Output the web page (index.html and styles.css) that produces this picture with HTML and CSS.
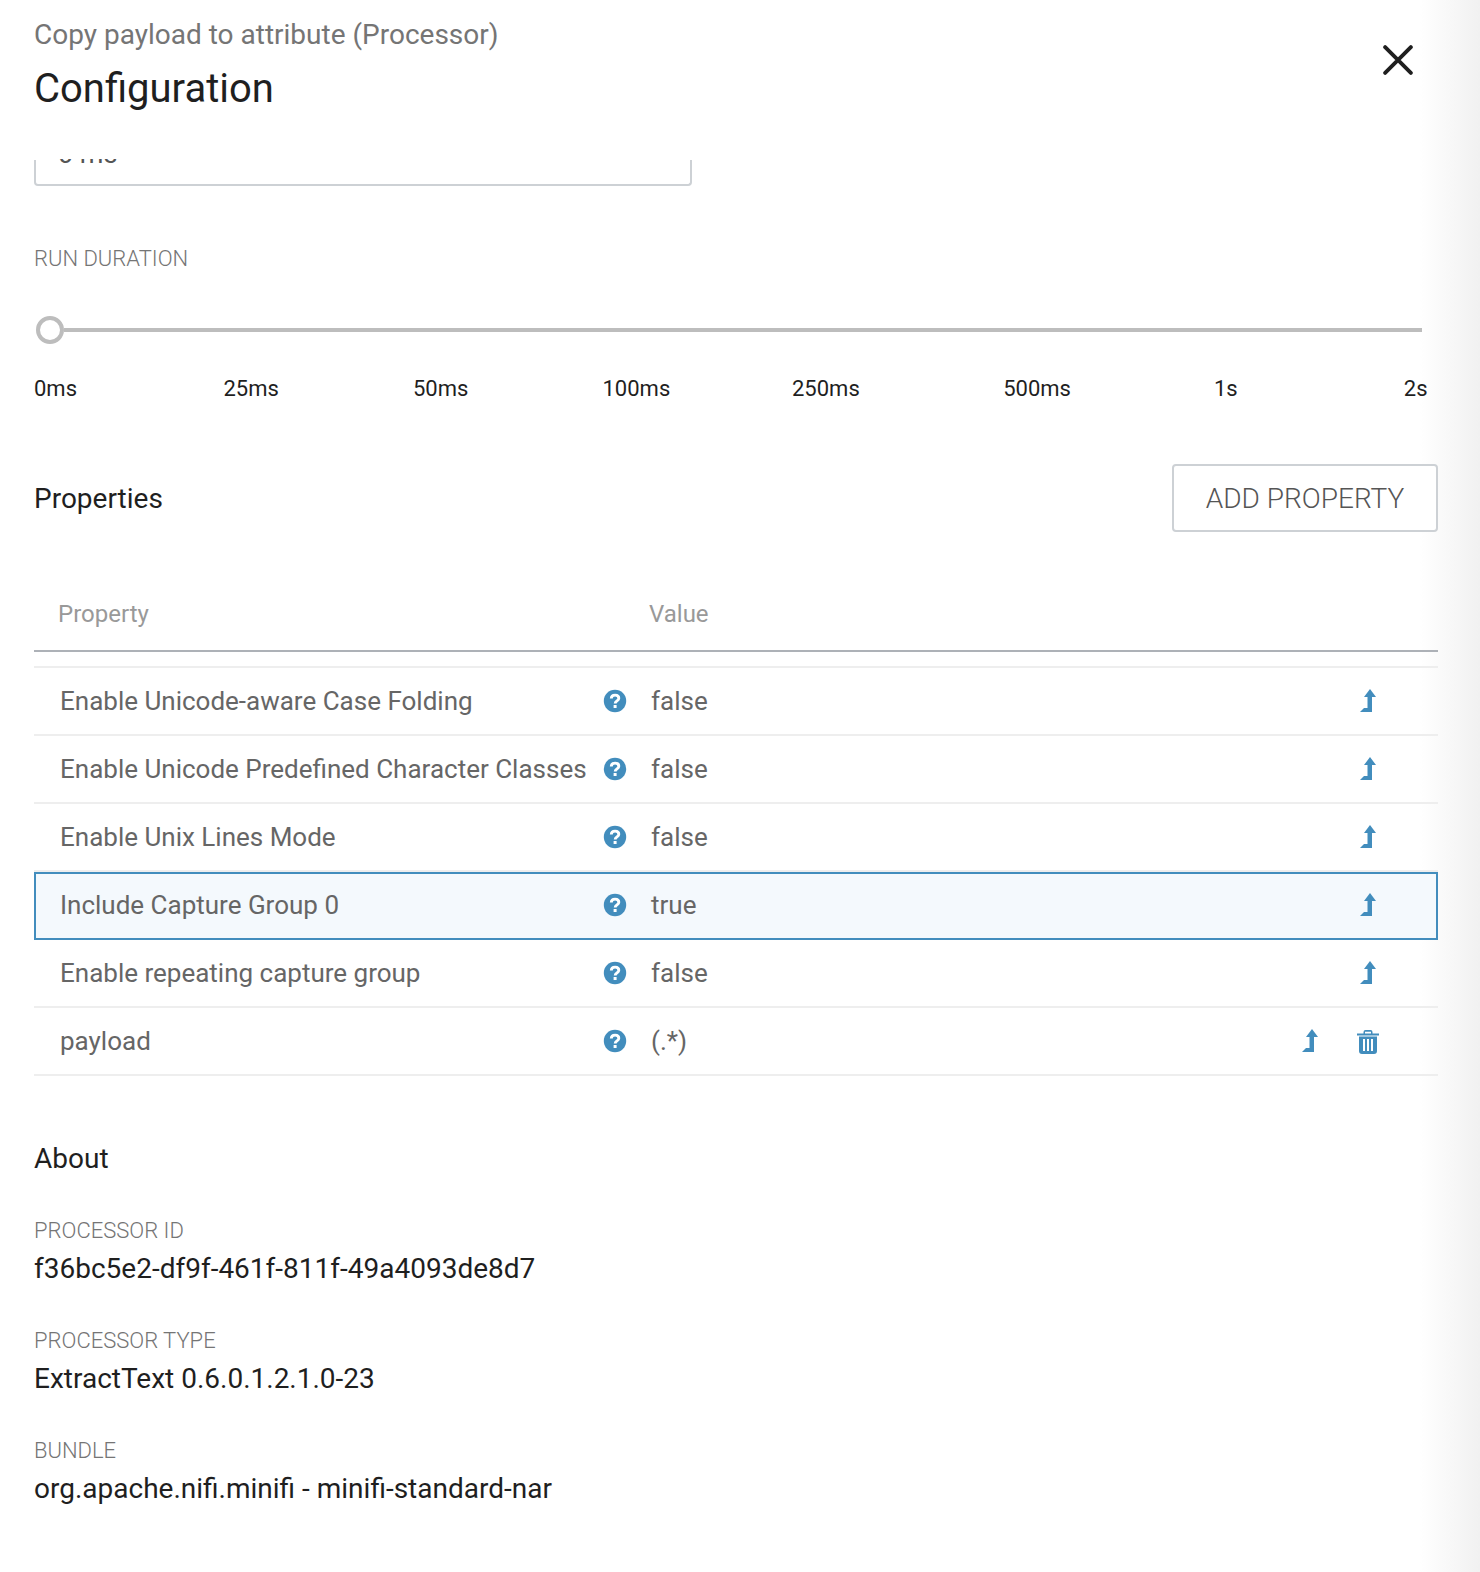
FILE: index.html
```html
<!DOCTYPE html>
<html lang="en">
<head>
  <meta charset="UTF-8">
  <title>Configuration</title>
  <link rel="stylesheet" href="styles.css">
</head>
<body>
  <svg class="defs" width="0" height="0">
    <symbol id="i-help" viewBox="0 0 24 24">
      <circle cx="12" cy="12" r="11.2" fill="#428dbd"/>
      <path d="M8.300 9.600c0-2.200 1.600-3.500 3.800-3.500s3.700 1.300 3.700 3.200c0 2.600-3.600 2.700-3.600 5.200" fill="none" stroke="#fff" stroke-width="2.900"/>
      <rect x="10.600" y="16" width="3" height="3" fill="#fff"/>
    </symbol>
    <symbol id="i-up" viewBox="0 0 16 23">
      <path d="M10 0 16 8H12V23H0L4 19H7.500V8H4z" fill="#428dbd"/>
    </symbol>
    <symbol id="i-trash" viewBox="0 0 22 24">
      <path d="M0 3.500h6.500V2q0-2 2-2h5q2 0 2 2v1.500H22v2H0zM8 3.500h6V1.800H8z" fill="#428dbd" fill-rule="evenodd"/>
      <path d="M2 6.500h18V21q0 3-3 3H5q-3 0-3-3zM6 9v12h2V9zM10 9v12h2V9zM14 9v12h2V9z" fill="#428dbd" fill-rule="evenodd"/>
    </symbol>
  </svg>

  <div class="panel">
    <header class="head">
      <div>
        <div class="subtitle">Copy payload to attribute (Processor)</div>
        <h1>Configuration</h1>
      </div>
      <svg class="close" viewBox="0 0 28 28"><path d="M2 2 26 26M26 2 2 26" stroke="#1f1f1f" stroke-width="3.600" fill="none" stroke-linecap="round"/></svg>
    </header>

    <div class="clipped-input"><div class="clipped-value"><span>0 ms</span></div></div>

    <div class="label run-label">RUN DURATION</div>
    <div class="slider"><span class="knob"></span><span class="track"></span></div>
    <div class="ticks">
      <span>0ms</span><span>25ms</span><span>50ms</span><span>100ms</span><span>250ms</span><span>500ms</span><span>1s</span><span>2s</span>
    </div>

    <div class="props-head">
      <h2>Properties</h2>
      <button class="add-btn">ADD PROPERTY</button>
    </div>

    <div class="table-head"><span class="col-name">Property</span><span>Value</span></div>
    <div class="rows">
      <div class="row">
        <span class="col-name">Enable Unicode-aware Case Folding</span>
        <svg class="help"><use href="#i-help"/></svg>
        <span class="col-value">false</span>
        <span class="actions"><svg class="up"><use href="#i-up"/></svg></span>
      </div>
      <div class="row">
        <span class="col-name">Enable Unicode Predefined Character Classes</span>
        <svg class="help"><use href="#i-help"/></svg>
        <span class="col-value">false</span>
        <span class="actions"><svg class="up"><use href="#i-up"/></svg></span>
      </div>
      <div class="row">
        <span class="col-name">Enable Unix Lines Mode</span>
        <svg class="help"><use href="#i-help"/></svg>
        <span class="col-value">false</span>
        <span class="actions"><svg class="up"><use href="#i-up"/></svg></span>
      </div>
      <div class="row selected">
        <span class="col-name">Include Capture Group 0</span>
        <svg class="help"><use href="#i-help"/></svg>
        <span class="col-value">true</span>
        <span class="actions"><svg class="up"><use href="#i-up"/></svg></span>
      </div>
      <div class="row">
        <span class="col-name">Enable repeating capture group</span>
        <svg class="help"><use href="#i-help"/></svg>
        <span class="col-value">false</span>
        <span class="actions"><svg class="up"><use href="#i-up"/></svg></span>
      </div>
      <div class="row">
        <span class="col-name">payload</span>
        <svg class="help"><use href="#i-help"/></svg>
        <span class="col-value">(.*)</span>
        <span class="actions"><svg class="up"><use href="#i-up"/></svg><svg class="trash"><use href="#i-trash"/></svg></span>
      </div>
    </div>

    <h2 class="about">About</h2>
    <div class="label">PROCESSOR ID</div>
    <div class="info">f36bc5e2-df9f-461f-811f-49a4093de8d7</div>
    <div class="label">PROCESSOR TYPE</div>
    <div class="info">ExtractText 0.6.0.1.2.1.0-23</div>
    <div class="label">BUNDLE</div>
    <div class="info">org.apache.nifi.minifi - minifi-standard-nar</div>
  </div>
</body>
</html>
```

FILE: styles.css
```css
* {
  box-sizing: border-box;
}
html, body {
  margin: 0;
  height: 1572px;
  overflow: hidden;
}
body {
  font-family: Roboto, sans-serif;
  color: #1f1f1f;
  background: linear-gradient(to right, #fff 0, #fff 1420px, #f1f1f1 1480px);
}
.defs {
  position: absolute;
}
.panel {
  width: 1438px;
  padding-left: 34px;
}
.head {
  height: 160px;
  display: flex;
  justify-content: space-between;
  padding-top: 17px;
}
.subtitle {
  font-size: 28px;
  line-height: 36px;
  color: #757575;
}
h1 {
  margin: 12px 0 0;
  font-size: 40px;
  line-height: 48px;
  font-weight: 400;
}
.close {
  width: 30px;
  height: 30px;
  margin: 28px 25px 0 0;
}
.clipped-input {
  display: flow-root;
  width: 658px;
  height: 26px;
  border: 2px solid #cdd1d5;
  border-top: 0;
  border-radius: 0 0 4px 4px;
  padding-left: 22px;
  font-size: 27px;
  line-height: 26px;
  color: #555;
}
.clipped-value {
  height: 4px;
  margin-top: -1px;
  overflow: hidden;
}
.clipped-value span {
  display: block;
  margin-top: -18px;
}
.label {
  font-size: 22px;
  line-height: 28px;
  font-weight: 300;
  color: #757575;
}
.run-label {
  margin-top: 59px;
}
.slider {
  display: flex;
  align-items: center;
  height: 30px;
  margin: 42px 0 0 2px;
  width: 1386px;
}
.knob {
  width: 28px;
  height: 28px;
  border: 4px solid #bdbdbd;
  border-radius: 50%;
  flex: none;
}
.track {
  flex: 1;
  height: 4px;
  background: #bdbdbd;
}
.ticks {
  display: grid;
  grid-template-columns: repeat(4, 189.500px) 211.200px 210.800px 189.800px auto;
  margin-top: 30px;
  font-size: 22px;
  line-height: 28px;
}
.props-head {
  display: flex;
  justify-content: space-between;
  align-items: center;
  margin-top: 61px;
  height: 68px;
}
h2 {
  margin: 0;
  font-size: 28px;
  line-height: 36px;
  font-weight: 400;
}
.props-head h2 {
  padding-top: 2px;
}
.add-btn {
  width: 266px;
  height: 68px;
  background: #fff;
  border: 2px solid #cdd1d5;
  border-radius: 4px;
  font-family: inherit;
  font-size: 28px;
  font-weight: 300;
  color: #555;
}
.table-head {
  display: flex;
  align-items: center;
  height: 120px;
  padding: 45px 0 0 24px;
  border-bottom: 2px solid #adb1b7;
  font-size: 24px;
  color: #999;
}
.table-head .col-name {
  width: 591px;
}
.rows {
  margin-top: 14px;
  border-top: 2px solid #eee;
}
.row {
  display: flex;
  align-items: center;
  height: 68px;
  padding-left: 26px;
  border-bottom: 2px solid #eee;
  font-size: 26px;
  color: #666;
}
.row .col-name {
  width: 542.500px;
  white-space: nowrap;
}
.row.selected {
  background: #f4f9fd;
  border: 2px solid #428dbd;
  padding: 0 0 2px 24px;
}
.help {
  width: 24px;
  height: 24px;
  margin-right: 24.500px;
  flex: none;
}
.col-value {
  flex: 1;
}
.actions {
  display: flex;
  align-items: center;
  gap: 36px;
  padding-right: 59px;
}
.selected .actions {
  padding-right: 57px;
}
.up {
  width: 16px;
  height: 23px;
  margin: 0 3px 2px 0;
}
.trash {
  width: 22px;
  height: 24px;
  margin-top: 1px;
}
.about {
  margin-top: 65px;
  margin-bottom: 40px;
}
.info {
  font-size: 28px;
  line-height: 36px;
  margin: 6px 0 40px;
}
```
